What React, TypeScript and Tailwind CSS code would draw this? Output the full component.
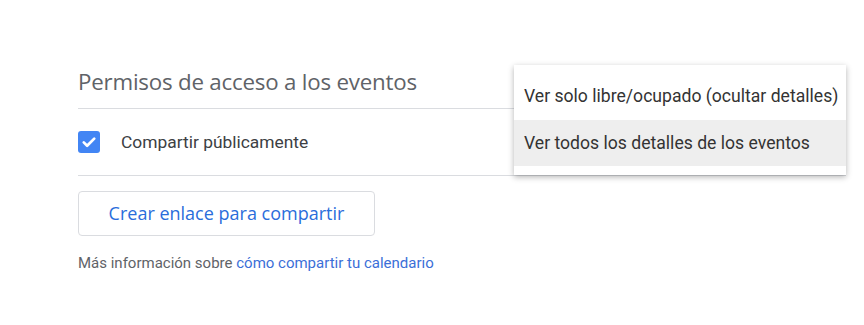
export default function App() {
    return (
        <div className="relative w-[864px] h-[325px] bg-white overflow-hidden" style={{ fontFamily: "Roboto, 'Liberation Sans', sans-serif" }}>
            <div className="pl-[78px] pt-[68px] w-[846px]">
                <h2 className="text-[22.3px] leading-[28px] text-[#5f6368] font-['Open_Sans',sans-serif] tracking-[-0.2px]">
                    Permisos de acceso a los eventos
                </h2>
                <div className="mt-[12px] h-px bg-[#dadce0]" />
                <div className="flex items-center h-[66px]">
                    <div className="w-[22px] h-[22px] rounded-[3px] bg-[#4285f4] flex items-center justify-center">
                        <svg width="18" height="18" viewBox="0 0 24 24" fill="none">
                            <path d="M5 12.5l4.5 4.5 9.5-9.5" stroke="white" strokeWidth="3.6" strokeLinecap="round" strokeLinejoin="round" />
                        </svg>
                    </div>
                    <span className="ml-[21px] text-[17.4px] text-[#3c4043]">Compartir públicamente</span>
                </div>
                <div className="h-px bg-[#dadce0]" />
                <button className="mt-[15px] w-[297px] h-[45px] rounded-[4px] border border-[#dadce0] text-[18px] font-medium text-[#2a6ddb] font-['Open_Sans',sans-serif]">
                    Crear enlace para compartir
                </button>
                <p className="mt-[16px] text-[15px] text-[#5f6368]">
                    Más información sobre <span className="text-[#3b6fd8]">cómo compartir tu calendario</span>
                </p>
            </div>

            <div className="absolute left-[514px] top-[65px] w-[332px] bg-white pt-[8px] pb-[9px] shadow-[0_2px_6px_rgba(0,0,0,0.3)]">
                <div className="h-[47px] flex items-center pl-[10px] text-[17.6px] text-[#333333]">
                    Ver solo libre/ocupado (ocultar detalles)
                </div>
                <div className="h-[46px] flex items-center pl-[10px] text-[17.6px] text-[#333333] bg-[#eeeeee]">
                    Ver todos los detalles de los eventos
                </div>
            </div>
        </div>
    )
}
